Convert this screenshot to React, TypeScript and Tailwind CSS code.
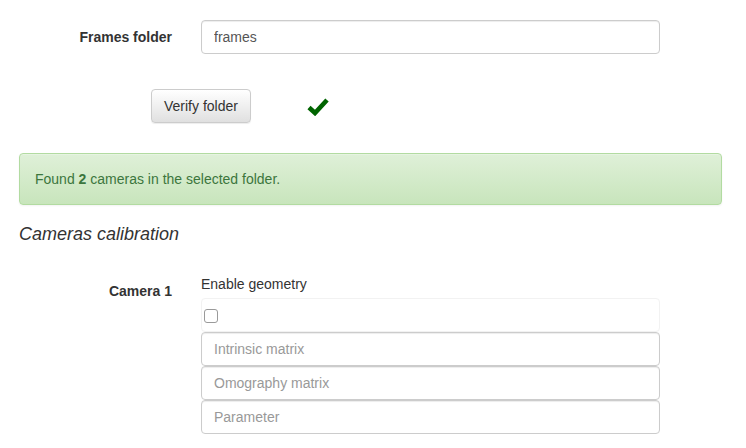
import * as React from "react";

const inputCls =
  "h-[34px] w-full rounded-[4px] border border-[#ccc] bg-white px-3 text-[14px] text-[#555] shadow-[inset_0_1px_1px_rgba(0,0,0,0.075)] outline-none placeholder:text-[#999]";

function OkIcon() {
  return (
    <svg width="22" height="19" viewBox="0 0 22 19" className="block">
      <path d="M2 10.5 L8 16 L20 3" fill="none" stroke="#006400" strokeWidth="4.6" strokeLinejoin="miter" />
    </svg>
  );
}

function Row({ label, labelPad = true, children }: { label?: string; labelPad?: boolean; children: React.ReactNode }) {
  return (
    <div className="flex">
      <div className="w-[186px] shrink-0 pr-[14px] text-right">
        {label && (
          <span className={`block text-[14px] font-bold leading-5 text-[#333] ${labelPad ? "pt-[7px]" : ""}`}>{label}</span>
        )}
      </div>
      <div className="w-[474px] pl-[15px]">{children}</div>
    </div>
  );
}

export default function App() {
  const [folder, setFolder] = React.useState("frames");
  const [geometry, setGeometry] = React.useState(false);

  return (
    <div className="min-h-[448px] bg-white px-[19px] pt-[20px] text-[14px] text-[#333]" style={{ fontFamily: '"Liberation Sans", Arial, sans-serif' }}>
      <div className="-ml-[19px]">
        <Row label="Frames folder">
          <input className={inputCls} value={folder} onChange={(e) => setFolder(e.target.value)} />
        </Row>
      </div>

      <div className="mt-[35px] flex items-center pl-[132px]">
        <button className="h-[34px] rounded-[4px] border border-[#ccc] bg-gradient-to-b from-white to-[#e0e0e0] px-3 text-[14px] text-[#333] shadow-[inset_0_1px_0_rgba(255,255,255,0.15),0_1px_1px_rgba(0,0,0,0.075)]">
          Verify folder
        </button>
        <div className="ml-[56px] mt-[1px]">
          <OkIcon />
        </div>
      </div>

      <div className="mt-[30px] w-[703px] rounded-[4px] border border-[#b2dba1] bg-gradient-to-b from-[#dff0d8] to-[#c8e5bc] px-[15px] py-[15px] leading-5 text-[#3c763d] shadow-[inset_0_1px_0_rgba(255,255,255,0.25),0_1px_2px_rgba(0,0,0,0.05)]">
        Found <b>2</b> cameras in the selected folder.
      </div>

      <h4 className="mt-[19px] text-[18px] italic leading-5 text-[#333]">Cameras calibration</h4>

      <div className="-ml-[19px] mt-[30px]">
        <Row label="Camera 1">
          <div className="leading-5">Enable geometry</div>
          <div className="mt-[4px] flex h-[34px] items-center rounded-[4px] border border-[#f2f2f2] px-[2px]">
            <button
              type="button"
              onClick={() => setGeometry(!geometry)}
              className="mt-[2px] h-[14px] w-[14px] rounded-[3px] border border-[#9a9a9a] bg-white"
            />
          </div>
          <input className={inputCls} placeholder="Intrinsic matrix" />
          <input className={inputCls} placeholder="Omography matrix" />
          <input className={inputCls} placeholder="Parameter" />
        </Row>
      </div>
    </div>
  );
}
